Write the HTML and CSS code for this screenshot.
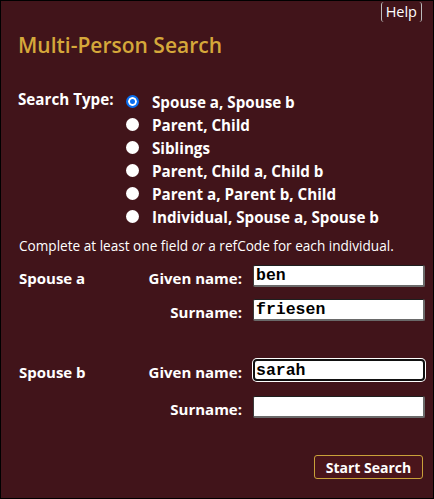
FILE: index.html
```html
<!DOCTYPE html>
<html>
<head>
<meta charset="utf-8">
<link rel="stylesheet" href="styles.css">
</head>
<body>
<div class="page">
  <div class="topbar"><a class="help">Help</a></div>
  <h1 class="title">Multi-Person Search</h1>
  <div class="searchtype">
    <div class="st-label">Search Type:</div>
    <div class="options">
      <label class="opt"><input type="radio" name="t" checked><span>Spouse a, Spouse b</span></label>
      <label class="opt"><input type="radio" name="t"><span>Parent, Child</span></label>
      <label class="opt"><input type="radio" name="t"><span>Siblings</span></label>
      <label class="opt"><input type="radio" name="t"><span>Parent, Child a, Child b</span></label>
      <label class="opt"><input type="radio" name="t"><span>Parent a, Parent b, Child</span></label>
      <label class="opt"><input type="radio" name="t"><span>Individual, Spouse a, Spouse b</span></label>
    </div>
  </div>
  <p class="note">Complete at least one field <i>or</i> a refCode for each individual.</p>
  <div class="person">
    <div class="row"><div class="who">Spouse a</div><div class="fl">Given name:</div><input class="field" type="text" value="ben"></div>
    <div class="row"><div class="who"></div><div class="fl">Surname:</div><input class="field" type="text" value="friesen"></div>
  </div>
  <div class="person second">
    <div class="row"><div class="who">Spouse b</div><div class="fl">Given name:</div><input class="field focus" type="text" value="sarah"></div>
    <div class="row"><div class="who"></div><div class="fl">Surname:</div><input class="field" type="text" value=""></div>
  </div>
  <div class="actions"><button class="start" type="button">Start Search</button></div>
</div>
</body>
</html>
```
FILE: styles.css
```css
html, body {
  margin: 0;
  padding: 0;
}
body {
  background: #000;
  font-family: "Open Sans", "DejaVu Sans", sans-serif;
  color: #fff;
}
.page {
  box-sizing: border-box;
  width: 434px;
  height: 499px;
  border: 1px solid #000;
  background: #41141a;
  padding: 0 9px 0 17px;
}
.topbar {
  display: flex;
  justify-content: flex-end;
  padding-top: 1px;
}
.help {
  font-size: 14.5px;
  line-height: 18px;
  padding: 1px 4px 1px 4px;
  border-left: 1px solid #bbb;
  border-right: 1px solid #bbb;
  border-radius: 3px;
  color: #fff;
  margin-right: 2px;
}
.title {
  margin: 9px 0 0 0;
  font-size: 21px;
  line-height: 28px;
  font-weight: 600;
  color: #d5a83a;
}
.searchtype {
  display: grid;
  grid-template-columns: 108px 1fr;
  margin-top: 31px;
  font-size: 15.2px;
  font-weight: 700;
}
.st-label {
  line-height: 23px;
  margin-top: -2px;
}
.options {
  display: flex;
  flex-direction: column;
}
.opt {
  display: flex;
  align-items: center;
  height: 23px;
  gap: 13px;
}
.opt input {
  appearance: none;
  -webkit-appearance: none;
  margin: 0;
  width: 13px;
  height: 13px;
  border-radius: 50%;
  background: #fff;
  flex: none;
}
.opt input:checked {
  border: 2px solid #0a6ff0;
  box-shadow: inset 0 0 0 2px #fff;
  background: #0a6ff0;
}
.note {
  margin: 9px 0 0 1px;
  font-size: 13.6px;
  line-height: 18px;
}
.note i {
  font-style: italic;
}
.person {
  margin-top: 9px;
  display: flex;
  flex-direction: column;
  gap: 12px;
}
.person.second {
  margin-top: 38px;
  gap: 15px;
}
.row {
  display: grid;
  grid-template-columns: 93px 120px 172px;
  column-gap: 11px;
  align-items: center;
  font-size: 15px;
  font-weight: 700;
  height: 22px;
}
.who {
  padding-left: 1px;
  padding-top: 4px;
}
.fl {
  text-align: right;
  padding-top: 4px;
}
.field {
  box-sizing: border-box;
  width: 172px;
  height: 22px;
  margin: 0;
  padding: 0 2px;
  border-style: solid;
  border-width: 1px 2px 2px 1px;
  border-color: #1f1f1f #6a6a6a #6a6a6a #3a3a3a;
  border-radius: 2px;
  background: #fff;
  font-family: "Liberation Mono", "Courier New", monospace;
  font-weight: 700;
  font-size: 16.5px;
  color: #000;
  outline: none;
}
.field.focus {
  border: 2px solid #111;
  border-radius: 4px;
  box-shadow: 0 0 0 1px #fff;
  padding: 0 1px;
}
.actions {
  display: flex;
  justify-content: flex-end;
  margin-top: 38px;
  padding-right: 1px;
}
.start {
  box-sizing: border-box;
  width: 109px;
  height: 24px;
  background: #4a151b;
  border: 1px solid #c9a13a;
  border-radius: 3px;
  color: #fff;
  font-family: "Open Sans", "DejaVu Sans", sans-serif;
  font-size: 14px;
  font-weight: 700;
  padding: 0;
}
```
